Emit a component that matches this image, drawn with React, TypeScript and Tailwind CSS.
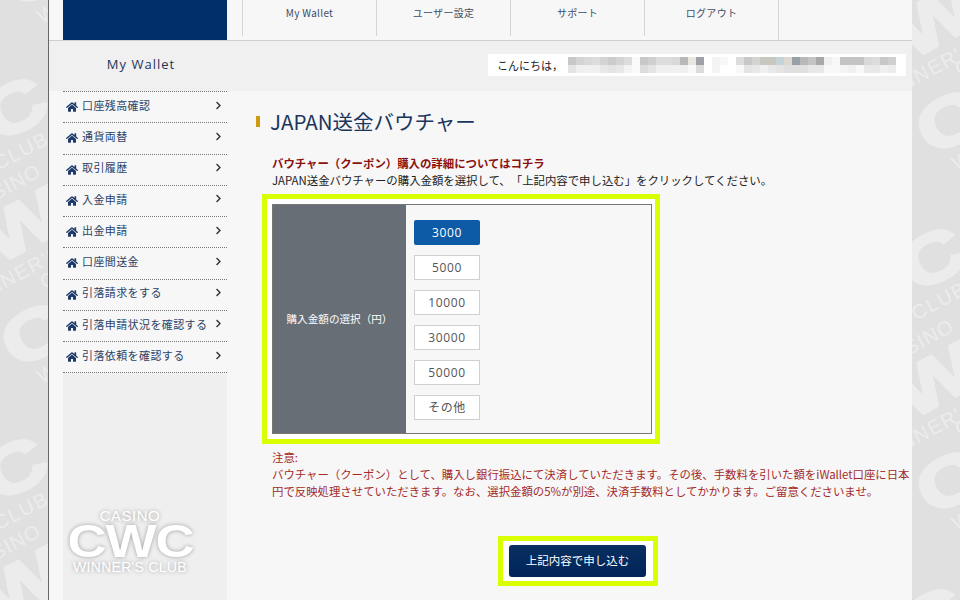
import React from "react";
import { FaHome, FaChevronRight } from "react-icons/fa";

const jp = "font-['Noto_Sans_CJK_JP','Noto_Sans',sans-serif]";

const menu = ["口座残高確認", "通貨両替", "取引履歴", "入金申請", "出金申請", "口座間送金", "引落請求をする", "引落申請状況を確認する", "引落依頼を確認する"];
const nav = ["My Wallet", "ユーザー設定", "サポート", "ログアウト"];
const amounts = ["5000", "10000", "30000", "50000", "その他"];

const mosaicTop = ["#c8c8c8","#d4d4d4","#d8d8d8","#dcdcdc","#d4d4d4","#cccccc","#d4d4d4","#dcdcdc","#fafafa","#c8c8c8","#d0d0d0","#dcdcdc","#dcdcdc","#d8d8d8","#b8b8b8","#e8e8e0","#a0a0a8","#ffffff","#f4f4f4","#f8f8f8","#ffffff","#dcdcdc","#c8c8c8","#d4d4d4","#c8c8c0","#c8c8c0","#c4d4d8","#dcd8d0","#98a0a8","#b8b8b8","#c4c4c4","#a8a8a8","#f0f0f0","#f8f8f8","#c4c4c4","#c4c4c4","#c4c4c4","#d8d8d8","#dcdcdc","#c8c8c8","#d0d0d0","#ffffff"];
const mosaicBottom = ["#e4e4e4","#f0f0f0","#f0f0f0","#f0f0f0","#e8e8e8","#e4e4e4","#e8e8e8","#f4f4f4","#fafafa","#dcdcdc","#e4e4e4","#f0f0f0","#f0f0f0","#f0f0f0","#f0f0f0","#f8f8f8","#dcdcdc","#ffffff","#f4f4f4","#ffffff","#ffffff","#f8f8f8","#e4e4e4","#e8e8e8","#f0f0f0","#e8e8e8","#e4e4e4","#e0e0e0","#e0e0e0","#e0e0e0","#e8e8e8","#e8e8e8","#f8f8f8","#f8f8f8","#f4f4f4","#f0f0f0","#f8f8f8","#e8e8e8","#e8e8e8","#f0f0f0","#ececec","#ffffff"];

const marks = [
  [22, 225], [22, 585], [97, 300], [97, -60], [-50, 142], [-50, 502],
  [935, 20], [1012, 87], [868, 292], [935, 380], [1012, 447], [868, 652],
];

function Mark({ x, y }: { x: number; y: number }) {
  return (
    <div
      className="absolute flex h-[120px] w-[240px] -rotate-[28deg] flex-col items-center justify-center font-['Liberation_Sans',sans-serif] leading-none text-[#ececec]"
      style={{ left: x - 120, top: y - 60 }}
    >
      <span className="text-[20px] tracking-[1px]">CASINO</span>
      <span className="scale-x-[1.3] text-[68px] font-bold leading-[62px] tracking-[-1px] [-webkit-text-stroke:3px_#ececec]">CWC</span>
      <span className="text-[20px] tracking-[1.5px]">WINNER'S CLUB</span>
    </div>
  );
}

function Mosaic() {
  return (
    <div className="flex flex-col">
      {[mosaicTop, mosaicBottom].map((row, r) => (
        <div key={r} className="flex">
          {row.map((c, i) => (
            <div key={i} className="h-[8px] w-[8px]" style={{ backgroundColor: c }} />
          ))}
        </div>
      ))}
    </div>
  );
}

export default function App() {
  return (
    <div className={`relative h-[600px] w-[960px] overflow-hidden bg-[#e0e0e0] [text-spacing-trim:space-all] ${jp}`}>
      <div className="absolute inset-0">
        {marks.map(([x, y]) => (
          <Mark key={`${x}-${y}`} x={x} y={y} />
        ))}
      </div>

      <div className="relative ml-[48px] flex h-full w-[864px] flex-col overflow-hidden border-l border-l-[#666] bg-[#f7f7f7]">
        <header className="flex h-[41px] shrink-0 border-b border-b-[#cfcfcf] pl-[14px]">
          <div className="h-[40px] w-[164px] bg-[#002f69]" />
          <nav className="ml-[15px] flex border-r border-r-[#d5d5d5]">
            {nav.map((n) => (
              <div key={n} className="flex h-[36px] w-[134px] justify-center border-l border-l-[#d5d5d5] pt-[6px] text-[10px] leading-[14px] tracking-[0.3px] text-[#3c4f69]">
                {n}
              </div>
            ))}
          </nav>
        </header>

        <div className="flex h-[50px] shrink-0 items-center bg-[#f0f0f0] pb-[2px] pl-[14px] pr-[6px]">
          <div className="w-[164px] pr-[8px] text-center font-['Open_Sans',sans-serif] text-[13px] font-medium tracking-[1px] text-[#1f3558]">My Wallet</div>
          <div className="ml-auto flex h-[22px] w-[418px] items-center bg-white pl-[9px] text-[11px] text-[#222]">
            <span className="w-[71px] shrink-0">こんにちは，</span>
            <Mosaic />
          </div>
        </div>

        <div className="flex min-h-0 flex-1 pl-[14px]">
          <aside className="w-[164px] shrink-0 bg-[#efefef]">
            <ul className="border-t border-dotted border-t-[#777] bg-[#f7f7f7]">
              {menu.map((m) => (
                <li key={m} className="flex h-[31.25px] items-center border-b border-dotted border-b-[#777] pb-[4px] pl-[3px] pr-[4px] text-[#2b4468]">
                  <FaHome className="mt-[4px] h-[12px] w-[12px] shrink-0 text-[#1d3a68]" />
                  <span className="ml-[4px] text-[11px] tracking-[0.4px]">{m}</span>
                  <FaChevronRight className="ml-auto h-[9px] w-[9px] shrink-0 text-[#333]" />
                </li>
              ))}
            </ul>
          </aside>

          <main className="w-[685px] shrink-0 pl-[29px]">
            <h1 className="mt-[17px] flex h-[26px] items-center whitespace-nowrap text-[20.5px] font-normal leading-[26px] text-[#1b365c]">
              <span className="mr-[10px] h-[11px] w-[4px] shrink-0 bg-[#cf9a10]" />
              JAPAN送金バウチャー
            </h1>
            <p className="mt-[21px] pl-[16px] text-[11.4px] font-bold leading-[17px] text-[#8b1010]">バウチャー（クーポン）購入の詳細についてはコチラ</p>
            <p className="whitespace-nowrap pl-[16px] text-[11.4px] leading-[17px] text-[#222]">JAPAN送金バウチャーの購入金額を選択して、「上記内容で申し込む」をクリックしてください。</p>

            <div className="ml-[6px] mt-[5px] w-[398px] border-[5px] border-[#d9ff00] bg-white py-[5px] pl-[5px] pr-[3px]">
              <div className="flex h-[230px] border border-[#777] bg-[#f7f7f7]">
                <div className="flex w-[133px] items-center justify-center bg-[#676e76] text-[10.6px] text-white">購入金額の選択（円）</div>
                <div className="flex flex-col gap-[10px] pl-[8px] pt-[15px]">
                  <div className="flex h-[25px] w-[66px] items-center justify-center rounded-[2px] bg-[#0d5aa7] font-['Open_Sans',sans-serif] text-[12px] tracking-[0.6px] text-white">3000</div>
                  {amounts.map((a) => (
                    <div key={a} className="flex h-[25px] w-[66px] items-center justify-center border border-[#d0d0d0] bg-white font-['Open_Sans','Noto_Sans_CJK_JP',sans-serif] text-[12px] tracking-[0.6px] text-[#555]">{a}</div>
                  ))}
                </div>
              </div>
            </div>

            <div className="mt-[5px] w-[656px] pl-[16px] text-[11.4px] leading-[17px] text-[#a42a2a]">
              <p>注意:</p>
              <p>バウチャー（クーポン）として、購入し銀行振込にて決済していただきます。その後、手数料を引いた額をiWallet口座に日本円で反映処理させていただきます。なお、選択金額の5%が別途、決済手数料としてかかります。ご留意くださいませ。</p>
            </div>

            <div className="ml-[242px] mt-[36px] w-[160px] border-[5px] border-[#d9ff00] bg-white px-[6px] py-[4px]">
              <div className="flex h-[32px] w-[137px] items-center justify-center rounded-[3px] bg-gradient-to-b from-[#0a2f60] to-[#00255a] text-[11.5px] text-white">上記内容で申し込む</div>
            </div>
          </main>
        </div>
      </div>

      <div className="absolute left-[66px] top-[508px] flex w-[128px] flex-col items-center font-['Liberation_Sans',sans-serif] leading-none text-white [text-shadow:0_0_4px_rgba(0,0,0,0.35)]">
        <span className="text-[15px] tracking-[0.5px]">CASINO</span>
        <span className="-mt-[1px] scale-x-[1.18] text-[46px] font-bold leading-[38px] tracking-[-1px]">CWC</span>
        <span className="text-[14px] tracking-[0.3px]">WINNER'S CLUB</span>
      </div>
    </div>
  );
}
